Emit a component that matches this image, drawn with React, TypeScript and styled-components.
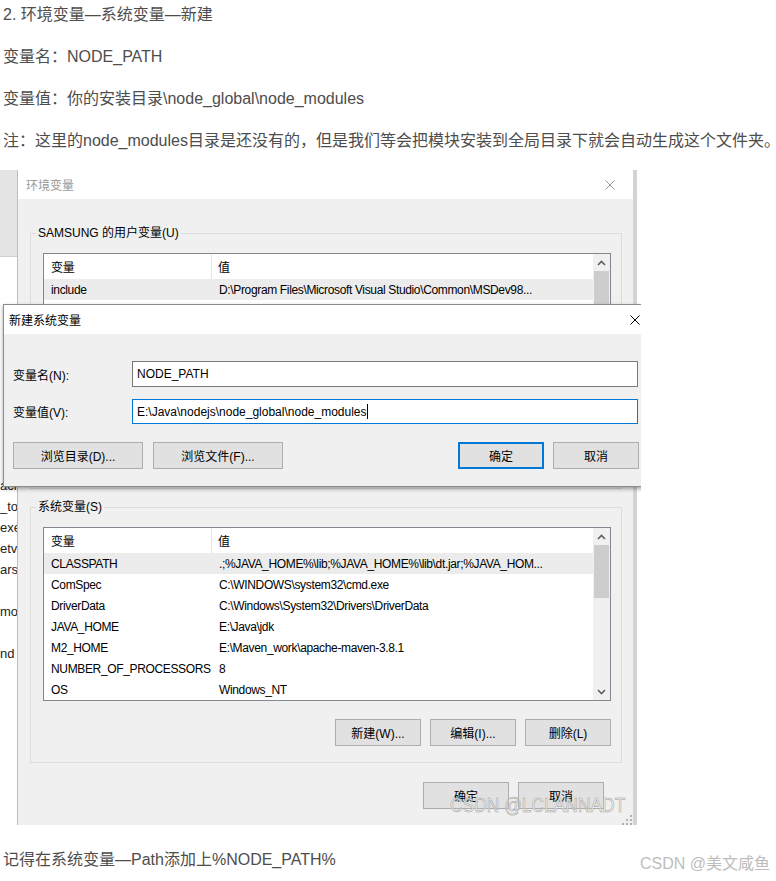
import React from "react";
import styled, { createGlobalStyle } from "styled-components";

const GlobalStyle = createGlobalStyle`
  html, body { margin: 0; padding: 0; background: #fff; }
  body { font-family: "Liberation Sans", "Noto Sans CJK SC", sans-serif; }
  * { box-sizing: border-box; }
`;

const Article = styled.div`
  width: 776px;
  padding-top: 2px;
  color: #4d4d4d;
  font-size: 16px;
`;

const Para = styled.p`
  margin: 0 0 16px;
  padding-left: 3px;
  line-height: 26px;
  white-space: nowrap;
`;

const FinalRow = styled.div`
  margin-top: 22px;
  padding: 0 6px 0 3px;
  display: flex;
  justify-content: space-between;
  align-items: flex-end;
`;

const FinalText = styled.span`
  line-height: 26px;
`;

const PageMark = styled.span`
  font-size: 16px;
  line-height: 18px;
  color: #bdbdbd;
`;

/* ---------- screenshot ---------- */

const Shot = styled.div`
  position: relative;
  width: 641px;
  height: 655px;
  overflow: hidden;
  display: flex;
  background: #fff;
  font-size: 12px;
  color: #000;
`;

const BehindWindow = styled.div`
  width: 17px;
  flex: none;
  display: flex;
  flex-direction: column;
  overflow: hidden;
`;

const BehindTitle = styled.div`
  height: 87px;
  background: #e4e4e4;
  border-bottom: 1px solid #cfcfcf;
`;

const BehindBody = styled.div`
  flex: 1;
  padding-top: 8px;
  font-size: 13px;
  line-height: 21px;
  color: #222;
  white-space: nowrap;
`;

const BehindLine = styled.div`
  height: 21px;
`;

const EnvWindow = styled.div`
  width: 620px;
  flex: none;
  height: 655px;
  display: flex;
  flex-direction: column;
  background: #f0f0f0;
  border-left: 1px solid #bdbdbd;
  border-right: 4px solid #d3d3d3;
`;

const TitleBar = styled.div<{ $active?: boolean }>`
  height: 29px;
  flex: none;
  background: #fff;
  display: flex;
  align-items: center;
  justify-content: space-between;
  padding-left: ${(p) => (p.$active ? 5 : 8)}px;
  color: ${(p) => (p.$active ? "#000" : "#999")};
`;

const CloseBox = styled.div<{ $active?: boolean }>`
  width: 46px;
  height: 100%;
  display: flex;
  align-items: center;
  justify-content: center;
  color: ${(p) => (p.$active ? "#000" : "#9a9a9a")};
`;

const WindowBody = styled.div`
  position: relative;
  flex: 1;
  display: flex;
  flex-direction: column;
  padding: 26px 11px 16px 12px;
`;

const Group = styled.fieldset<{ $gap?: number }>`
  margin: ${(p) => p.$gap ?? 0}px 0 0;
  padding: 12px 10px 16px 12px;
  border: 1px solid #dcdcdc;
  min-width: 0;
`;

const GroupLabel = styled.legend`
  margin-left: -7px;
  padding: 0 2px;
  font-size: 12px;
  line-height: 16px;
`;

const ListBox = styled.div`
  height: 174px;
  border: 1px solid #828790;
  background: #fff;
  display: flex;
  overflow: hidden;
  letter-spacing: -0.35px;
`;

const Table = styled.div`
  flex: 1;
  min-width: 0;
  display: flex;
  flex-direction: column;
`;

const HeaderRow = styled.div`
  height: 25px;
  flex: none;
  display: grid;
  grid-template-columns: 168px 1fr;
  align-items: stretch;
`;

const HeaderCell = styled.div<{ $first?: boolean }>`
  display: flex;
  align-items: center;
  padding-left: ${(p) => (p.$first ? 7 : 6)}px;
  border-right: ${(p) => (p.$first ? "1px solid #e5e5e5" : "none")};
`;

const Row = styled.div<{ $selected?: boolean }>`
  height: 21px;
  flex: none;
  display: grid;
  grid-template-columns: 168px 1fr;
  align-items: center;
  background: ${(p) => (p.$selected ? "#ececec" : "transparent")};
`;

const Cell = styled.div`
  padding-left: 7px;
  white-space: nowrap;
  overflow: hidden;
`;

const ScrollBar = styled.div`
  width: 17px;
  flex: none;
  background: #f0f0f0;
  display: flex;
  flex-direction: column;
`;

const ScrollArrow = styled.div`
  height: 17px;
  flex: none;
  display: flex;
  align-items: center;
  justify-content: center;
  color: #606060;
`;

const ScrollTrack = styled.div`
  flex: 1;
  display: flex;
  flex-direction: column;
`;

const ScrollThumb = styled.div`
  height: 53px;
  margin: 0 1px;
  background: #cdcdcd;
`;

const ButtonRow = styled.div<{ $top: number; $right?: number }>`
  margin-top: ${(p) => p.$top}px;
  padding-right: ${(p) => p.$right ?? 0}px;
  display: flex;
  justify-content: flex-end;
  gap: 9px;
`;

const WinButton = styled.div<{ $w: number; $default?: boolean }>`
  width: ${(p) => p.$w}px;
  height: 27px;
  flex: none;
  display: flex;
  align-items: center;
  justify-content: center;
  background: #e1e1e1;
  border: ${(p) => (p.$default ? "2px solid #0078d7" : "1px solid #adadad")};
  font-size: 12px;
  color: #000;
`;

const SizeGrip = styled.div`
  position: absolute;
  right: 1px;
  bottom: 1px;
  width: 10px;
  height: 10px;
  color: #b0b0b0;
`;

/* ---------- dialog ---------- */

const Dialog = styled.div`
  position: absolute;
  left: 3px;
  top: 134px;
  width: 656px;
  height: 183px;
  display: flex;
  flex-direction: column;
  background: #f0f0f0;
  border: 1px solid #8c8c8c;
  box-shadow: 0 2px 4px rgba(0, 0, 0, 0.35);
`;

const DialogBody = styled.div`
  flex: 1;
  padding: 27px 19px 17px 9px;
  display: flex;
  flex-direction: column;
`;

const FormGrid = styled.div`
  display: grid;
  grid-template-columns: 119px 1fr;
  row-gap: 12px;
  align-items: center;
`;

const FieldLabel = styled.div`
  font-size: 12px;
`;

const TextBox = styled.div<{ $focused?: boolean }>`
  height: ${(p) => (p.$focused ? 25 : 26)}px;
  margin-right: 1px;
  display: flex;
  align-items: center;
  padding-left: 4px;
  background: #fff;
  border: 1px solid ${(p) => (p.$focused ? "#0078d7" : "#7a7a7a")};
  white-space: nowrap;
`;

const Caret = styled.span`
  display: inline-block;
  width: 1px;
  height: 15px;
  background: #000;
`;

const DialogButtons = styled.div`
  margin-top: 18px;
  display: flex;
  justify-content: space-between;
`;

const ButtonGroup = styled.div<{ $gap: number }>`
  display: flex;
  gap: ${(p) => p.$gap}px;
`;

const ShotMark = styled.div`
  position: absolute;
  left: 450px;
  top: 625px;
  font-size: 20px;
  line-height: 20px;
  white-space: nowrap;
  color: rgba(240, 240, 240, 0.85);
  -webkit-text-stroke: 0.5px #9a9a9a;
  transform: scaleX(0.87);
  transform-origin: left center;
`;

/* ---------- icons ---------- */

const CloseIcon = () => (
  <svg width="10" height="10" viewBox="0 0 10 10">
    <path d="M0.5 0.5 L9.5 9.5 M9.5 0.5 L0.5 9.5" stroke="currentColor" strokeWidth="1" fill="none" />
  </svg>
);

const ChevronUp = () => (
  <svg width="9" height="6" viewBox="0 0 9 6">
    <path d="M1 5 L4.5 1.5 L8 5" stroke="currentColor" strokeWidth="1.6" fill="none" />
  </svg>
);

const ChevronDown = () => (
  <svg width="9" height="6" viewBox="0 0 9 6">
    <path d="M1 1 L4.5 4.5 L8 1" stroke="currentColor" strokeWidth="1.6" fill="none" />
  </svg>
);

const GripIcon = () => (
  <svg width="10" height="10" viewBox="0 0 10 10" fill="currentColor">
    <rect x="8" y="0" width="2" height="2" />
    <rect x="4" y="4" width="2" height="2" />
    <rect x="8" y="4" width="2" height="2" />
    <rect x="0" y="8" width="2" height="2" />
    <rect x="4" y="8" width="2" height="2" />
    <rect x="8" y="8" width="2" height="2" />
  </svg>
);

/* ---------- data ---------- */

type Var = [string, string];

const userVars: Var[] = [
  ["include", "D:\\Program Files\\Microsoft Visual Studio\\Common\\MSDev98..."],
  ["lib", "D:\\Program Files\\Microsoft Visual Studio\\VC98\\Lib"],
  ["MSDevDir", "D:\\Program Files\\Microsoft Visual Studio\\Common\\MSDev98"],
  ["OneDrive", "C:\\Users\\SAMSUNG\\OneDrive"],
  ["Path", "C:\\Users\\SAMSUNG\\AppData\\Local\\Microsoft\\WindowsApps;"],
  ["TEMP", "C:\\Users\\SAMSUNG\\AppData\\Local\\Temp"],
  ["TMP", "C:\\Users\\SAMSUNG\\AppData\\Local\\Temp"],
];

const sysVars: Var[] = [
  ["CLASSPATH", " .;%JAVA_HOME%\\lib;%JAVA_HOME%\\lib\\dt.jar;%JAVA_HOM..."],
  ["ComSpec", "C:\\WINDOWS\\system32\\cmd.exe"],
  ["DriverData", "C:\\Windows\\System32\\Drivers\\DriverData"],
  ["JAVA_HOME", "E:\\Java\\jdk"],
  ["M2_HOME", "E:\\Maven_work\\apache-maven-3.8.1"],
  ["NUMBER_OF_PROCESSORS", "8"],
  ["OS", "Windows_NT"],
];

const behindLines = ["", "", "", "", "", "", "", "", "", "", "acl", "_to", "exe", "etv", "ars", "", "mo", "", "nd"];

const VarList = ({ rows }: { rows: Var[] }) => (
  <ListBox>
    <Table>
      <HeaderRow>
        <HeaderCell $first>变量</HeaderCell>
        <HeaderCell>值</HeaderCell>
      </HeaderRow>
      {rows.map(([k, v], i) => (
        <Row key={k} $selected={i === 0}>
          <Cell>{k}</Cell>
          <Cell>{v}</Cell>
        </Row>
      ))}
    </Table>
    <ScrollBar>
      <ScrollArrow>
        <ChevronUp />
      </ScrollArrow>
      <ScrollTrack>
        <ScrollThumb />
      </ScrollTrack>
      <ScrollArrow>
        <ChevronDown />
      </ScrollArrow>
    </ScrollBar>
  </ListBox>
);

const VarGroup = ({ title, rows, gap }: { title: string; rows: Var[]; gap?: number }) => (
  <Group $gap={gap}>
    <GroupLabel>{title}</GroupLabel>
    <VarList rows={rows} />
    <ButtonRow $top={18}>
      <WinButton $w={86}>新建(W)...</WinButton>
      <WinButton $w={86}>编辑(I)...</WinButton>
      <WinButton $w={86}>删除(L)</WinButton>
    </ButtonRow>
  </Group>
);

export default function App() {
  return (
    <>
      <GlobalStyle />
      <Article>
        <Para>2. 环境变量—系统变量—新建</Para>
        <Para>变量名：NODE_PATH</Para>
        <Para>变量值：你的安装目录\node_global\node_modules</Para>
        <Para>注：这里的node_modules目录是还没有的，但是我们等会把模块安装到全局目录下就会自动生成这个文件夹。</Para>

        <Shot>
          <BehindWindow>
            <BehindTitle />
            <BehindBody>
              {behindLines.map((t, i) => (
                <BehindLine key={i}>{t}</BehindLine>
              ))}
            </BehindBody>
          </BehindWindow>

          <EnvWindow>
            <TitleBar>
              <span>环境变量</span>
              <CloseBox>
                <CloseIcon />
              </CloseBox>
            </TitleBar>
            <WindowBody>
              <VarGroup title="SAMSUNG 的用户变量(U)" rows={userVars} />
              <VarGroup title="系统变量(S)" rows={sysVars} gap={10} />
              <ButtonRow $top={19} $right={18}>
                <WinButton $w={86}>确定</WinButton>
                <WinButton $w={86}>取消</WinButton>
              </ButtonRow>
              <SizeGrip>
                <GripIcon />
              </SizeGrip>
            </WindowBody>
          </EnvWindow>

          <Dialog>
            <TitleBar $active>
              <span>新建系统变量</span>
              <CloseBox $active>
                <CloseIcon />
              </CloseBox>
            </TitleBar>
            <DialogBody>
              <FormGrid>
                <FieldLabel>变量名(N):</FieldLabel>
                <TextBox>NODE_PATH</TextBox>
                <FieldLabel>变量值(V):</FieldLabel>
                <TextBox $focused>
                  E:\Java\nodejs\node_global\node_modules
                  <Caret />
                </TextBox>
              </FormGrid>
              <DialogButtons>
                <ButtonGroup $gap={10}>
                  <WinButton $w={130}>浏览目录(D)...</WinButton>
                  <WinButton $w={130}>浏览文件(F)...</WinButton>
                </ButtonGroup>
                <ButtonGroup $gap={9}>
                  <WinButton $w={86} $default>
                    确定
                  </WinButton>
                  <WinButton $w={86}>取消</WinButton>
                </ButtonGroup>
              </DialogButtons>
            </DialogBody>
          </Dialog>

          <ShotMark>CSDN @LCLANNADT</ShotMark>
        </Shot>

        <FinalRow>
          <FinalText>记得在系统变量—Path添加上%NODE_PATH%</FinalText>
          <PageMark>CSDN @美文咸鱼</PageMark>
        </FinalRow>
      </Article>
    </>
  );
}
